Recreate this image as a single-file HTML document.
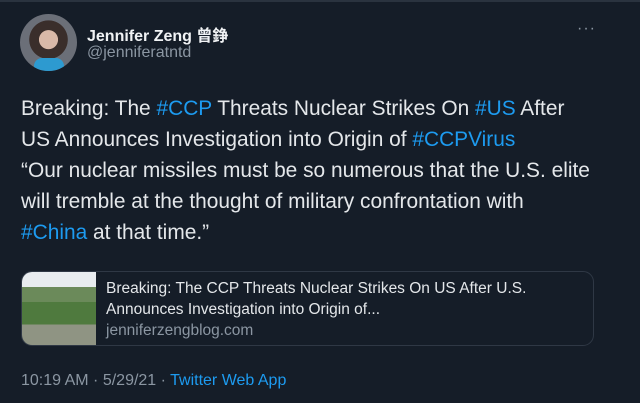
<!DOCTYPE html>
<html><head><meta charset="utf-8"><style>
*{margin:0;padding:0;box-sizing:border-box}
body{width:640px;height:403px;background:#151d28;font-family:"Liberation Sans","Noto Sans CJK SC",sans-serif;color:#d9dde2;position:relative;overflow:hidden}
.top{position:absolute;left:0;top:0;width:640px;height:2px;background:#2a333f}
.av{position:absolute;left:20px;top:14px;width:57px;height:57px;border-radius:50%;background:radial-gradient(circle at 50% 45%,#d9b9a8 0 22%,#3a2e2b 23% 45%,#6b6f78 46%);overflow:hidden}
.av i{position:absolute;left:14px;top:44px;width:30px;height:14px;background:#2d9ad0;border-radius:8px 8px 0 0}
.name{position:absolute;left:87px;top:22px;font-size:16px;font-weight:bold;color:#f1f3f5}
.handle{position:absolute;left:87px;top:44px;font-size:16px;color:#8b96a2}
.dots{position:absolute;left:577px;top:20px;font-size:16px;color:#8b96a2;letter-spacing:1px}
.txt{position:absolute;left:21px;top:93px;width:610px;font-size:20.9px;line-height:31px;color:#e4e7ea}
.h{color:#1d9bf0}
.card{position:absolute;left:21px;top:271px;width:573px;height:75px;border:1px solid #2f3845;border-radius:11px;overflow:hidden}
.img{position:absolute;left:0;top:0;width:74px;height:75px;background:linear-gradient(180deg,#e8ecef 0 20%,#6b8a5a 20% 40%,#4f7a3e 40% 70%,#8f9483 70% 100%)}
.ct{position:absolute;left:84px;top:6px;font-size:15.5px;line-height:21px;color:#e4e7ea}
.ct .d{color:#8b96a2}
.foot{position:absolute;left:21px;top:372px;font-size:16px;color:#8b96a2}
</style></head><body>
<div class="top"></div>
<div class="av"><i></i></div>
<div class="name">Jennifer Zeng 曾錚</div>
<div class="handle">@jenniferatntd</div>
<div class="dots">···</div>
<div class="txt">Breaking: The <span class="h">#CCP</span> Threats Nuclear Strikes On <span class="h">#US</span> After<br>US Announces Investigation into Origin of <span class="h">#CCPVirus</span><br>“Our nuclear missiles must be so numerous that the U.S. elite<br>will tremble at the thought of military confrontation with<br><span class="h">#China</span> at that time.”</div>
<div class="card"><div class="img"></div><div class="ct">Breaking: The CCP Threats Nuclear Strikes On US After U.S.<br>Announces Investigation into Origin of...<br><span class="d">jenniferzengblog.com</span></div></div>
<div class="foot">10:19 AM · 5/29/21 · <span class="h">Twitter Web App</span></div>
</body></html>
